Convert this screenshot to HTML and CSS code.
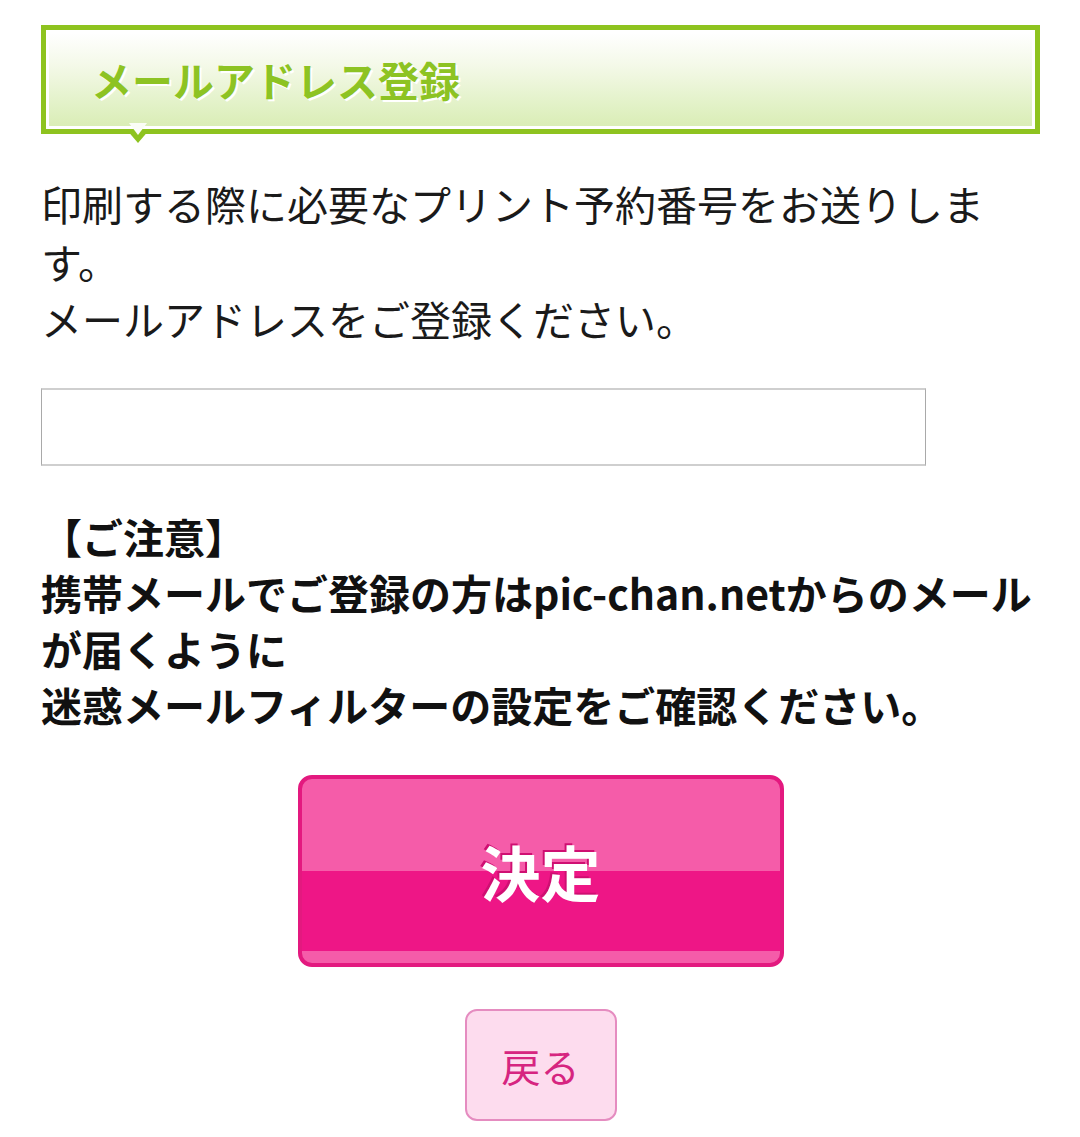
FILE: index.html
```html
<!DOCTYPE html>
<html lang="ja">
<head>
<meta charset="utf-8">
<title>メールアドレス登録</title>
<link rel="stylesheet" href="styles.css">
</head>
<body>
<div class="page">
  <h1 class="title"><span class="title-inner">メールアドレス登録</span></h1>
  <p class="lead">印刷する際に必要なプリント予約番号をお送りします。<br>メールアドレスをご登録ください。</p>
  <input class="mail" type="email">
  <p class="notice">【ご注意】<br>携帯メールでご登録の方はpic-chan.netからのメールが届くように<br>迷惑メールフィルターの設定をご確認ください。</p>
  <div class="actions">
    <button class="btn-ok" type="button">決定</button>
    <button class="btn-back" type="button">戻る</button>
  </div>
</div>
</body>
</html>
```
FILE: styles.css
```css
html, body {
  margin: 0;
  padding: 0;
  background: #fff;
}
body {
  font-family: "Noto Sans CJK JP", "Noto Sans", sans-serif;
  color: #1a1a1a;
}
.page {
  padding: 25px 40px 0 41px;
}
.title {
  position: relative;
  margin: 0;
  border: 5px solid #8ec31f;
  padding: 3px;
  background: #fff;
}
.title::before {
  content: "";
  position: absolute;
  left: 80px;
  top: 99px;
  width: 0;
  height: 0;
  border-left: 12px solid transparent;
  border-right: 12px solid transparent;
  border-top: 14px solid #8ec31f;
}
.title::after {
  content: "";
  position: absolute;
  left: 83px;
  top: 93px;
  width: 0;
  height: 0;
  border-left: 9px solid transparent;
  border-right: 9px solid transparent;
  border-top: 12px solid #fbfdf6;
}
.title-inner {
  display: block;
  height: 93px;
  line-height: 93px;
  padding-left: 42px;
  background: linear-gradient(to bottom, #ffffff 0%, #f4f9e8 35%, #e3f2c9 75%, #daedb6 100%);
  color: #8dc323;
  font-size: 41px;
  font-weight: 700;
  text-shadow: 2px 2px 0 #fff;
}
.lead {
  margin: 41px 0 0;
  width: 982px;
  font-size: 41px;
  line-height: 57.5px;
  font-weight: 400;
}
.mail {
  display: block;
  box-sizing: border-box;
  width: 885px;
  height: 78px;
  margin: 40px 0 0;
  padding: 0 10px;
  border-top: 2px solid #cfcfcf;
  border-bottom: 2px solid #cfcfcf;
  border-left: 1px solid #a9a9a9;
  border-right: 1px solid #a9a9a9;
  background: #fff;
  font-size: 36px;
}
.notice {
  margin: 42px 0 0;
  font-size: 41px;
  line-height: 56px;
  font-weight: 700;
  color: #111;
}
.actions {
  display: flex;
  flex-direction: column;
  align-items: center;
  gap: 42px;
  margin-top: 43px;
}
.btn-ok {
  box-sizing: border-box;
  width: 486px;
  height: 192px;
  padding: 0;
  border: 4px solid #e3197f;
  border-radius: 14px;
  background: linear-gradient(to bottom, #f55ca9 0, #f55ca9 92px, #ee1686 92px, #ee1686 172px, #f55ca9 172px, #f55ca9 100%);
  color: #fff;
  font-family: "Noto Sans CJK JP", sans-serif;
  font-size: 60px;
  font-weight: 700;
  text-shadow: -2px -2px 0 #cf0f72;
}
.btn-back {
  box-sizing: border-box;
  width: 152px;
  height: 112px;
  padding: 0;
  border: 2px solid #e58cc0;
  border-radius: 12px;
  background: #fddcee;
  color: #d62580;
  font-family: "Noto Sans CJK JP", sans-serif;
  font-size: 39px;
  font-weight: 400;
}
```
